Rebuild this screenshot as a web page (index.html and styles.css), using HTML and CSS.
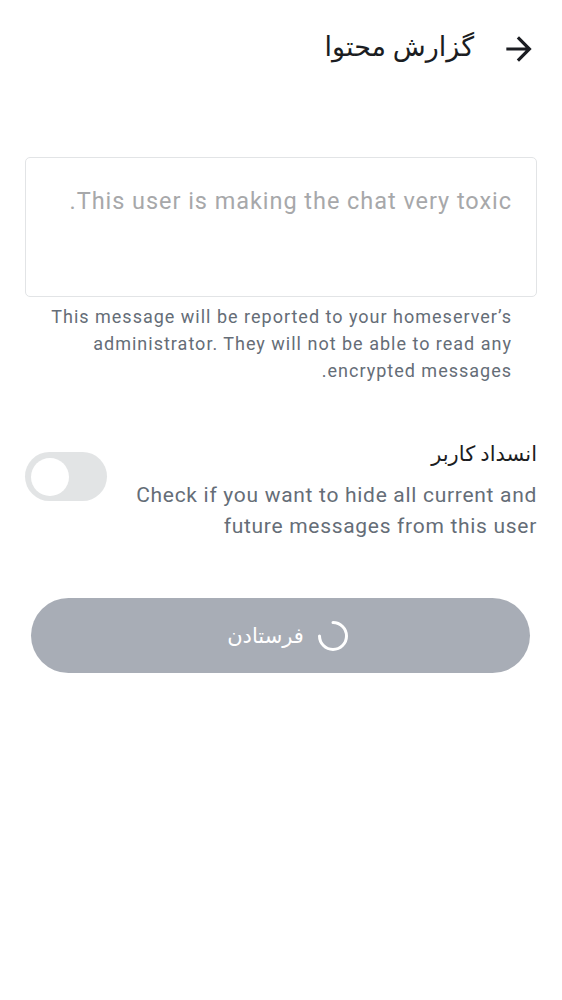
FILE: index.html
```html
<!DOCTYPE html>
<html lang="fa" dir="rtl">
<head>
<meta charset="utf-8">
<link rel="stylesheet" href="styles.css">
</head>
<body>
<div class="screen">
  <header class="topbar">
    <button class="back" aria-label="back">
      <svg viewBox="0 0 24 24" width="38" height="38"><path d="M12 4l-1.41 1.41L16.17 11H4v2h12.17l-5.58 5.59L12 20l8-8z" fill="#1b1d22"/></svg>
    </button>
    <h1 class="title">گزارش محتوا</h1>
  </header>

  <div class="field">
    <textarea class="input" placeholder="This user is making the chat very toxic."></textarea>
    <p class="help">This message will be reported to your homeserver’s administrator. They will not be able to read any encrypted messages.</p>
  </div>

  <div class="block-row">
    <div class="block-text">
      <div class="block-title">انسداد کاربر</div>
      <div class="block-desc">Check if you want to hide all current and future messages from this user</div>
    </div>
    <div class="toggle"><span class="knob"></span></div>
  </div>

  <div class="btn-wrap">
    <button class="send">
      <svg class="spinner" viewBox="0 0 32 32" width="32" height="32"><path d="M16 2.5 A13.5 13.5 0 1 1 2.5 16" fill="none" stroke="#ffffff" stroke-width="3" stroke-linecap="round"/></svg>
      <span>فرستادن</span>
    </button>
  </div>
</div>
</body>
</html>
```

FILE: styles.css
```css
* { box-sizing: border-box; }
html, body { margin: 0; padding: 0; background: #ffffff; }
body {
  font-family: Roboto, "DejaVu Sans", sans-serif;
  color: #1b1d22;
  width: 562px;
  height: 1000px;
}
.screen { display: flex; flex-direction: column; }

.topbar {
  display: flex;
  align-items: center;
  height: 60px;
  margin-top: 19px;
  padding-right: 24px;
  gap: 26px;
}
.back {
  background: none;
  border: 0;
  padding: 0;
  width: 38px;
  height: 38px;
  display: flex;
}
.title {
  margin: 0;
  font-size: 27px;
  font-weight: 400;
  line-height: 32px;
  margin-top: -4px;
}

.field { padding: 78px 25px 0; display: flex; flex-direction: column; }
.input {
  display: block;
  width: 512px;
  height: 140px;
  border: 1.5px solid #e2e4e6;
  border-radius: 5px;
  resize: none;
  padding: 29px 24px 20px;
  font-family: Roboto, sans-serif;
  font-size: 23.5px;
  letter-spacing: 0.95px;
  direction: rtl;
  outline: none;
}
.input::placeholder { color: #a7a8aa; }
.help {
  margin: 6px 0 0;
  padding: 0 25px 0 25px;
  font-size: 18px;
  line-height: 27px;
  color: #656d77;
  letter-spacing: 1px;
}

.block-row {
  display: flex;
  align-items: flex-start;
  justify-content: space-between;
  padding: 0 25px;
  margin-top: 55px;
}
.block-text { display: flex; flex-direction: column; }
.block-title { font-size: 21px; line-height: 30px; color: #1b1d22; }
.block-desc {
  font-size: 21px;
  line-height: 31px;
  color: #656d77;
  margin-top: 11px;
  width: 410px;
  letter-spacing: 0.7px;
}
.toggle {
  width: 82px;
  height: 49px;
  border-radius: 25px;
  background: #e2e4e5;
  margin-top: 13px;
  display: flex;
  align-items: center;
  justify-content: flex-end;
  padding: 0 6px;
}
.knob {
  width: 38px;
  height: 38px;
  border-radius: 50%;
  background: #ffffff;
}

.btn-wrap { padding: 0 32px 0 31px; margin-top: 56px; }
.send {
  width: 100%;
  height: 75px;
  border: 0;
  border-radius: 38px;
  background: #a8adb6;
  color: #ffffff;
  font-family: Roboto, "DejaVu Sans", sans-serif;
  font-size: 21px;
  display: flex;
  align-items: center;
  justify-content: center;
  gap: 13px;
  direction: rtl;
  padding-left: 21px;
}
.spinner { display: block; }
```
